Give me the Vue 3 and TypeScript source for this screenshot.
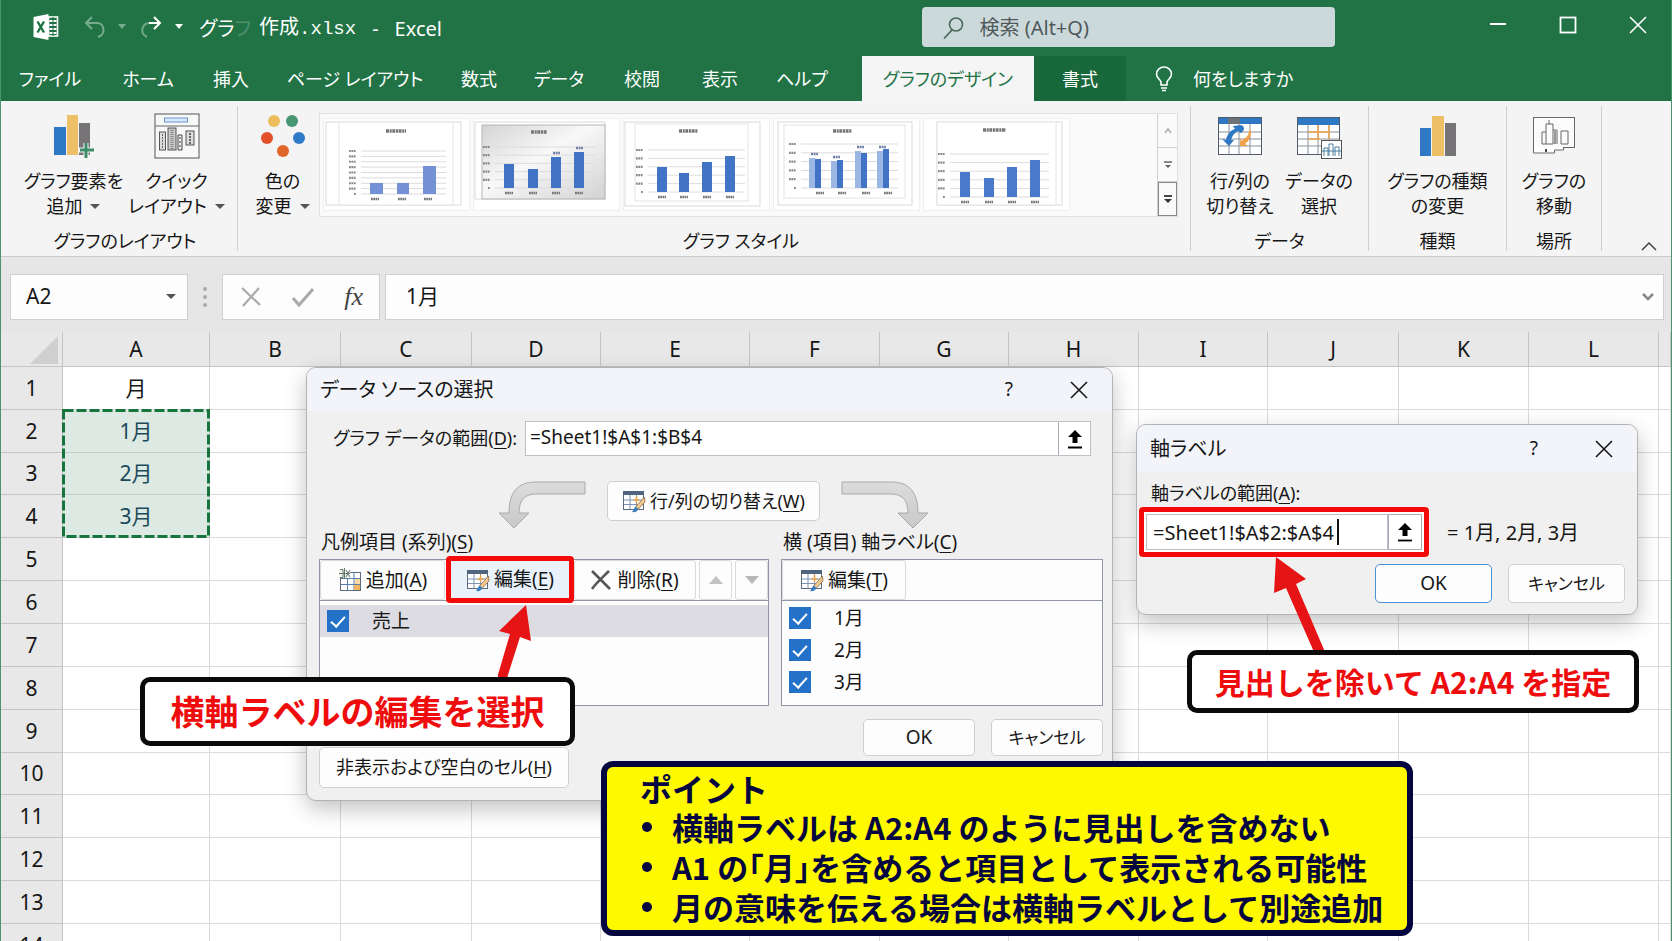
<script setup lang="ts">
import { ref } from 'vue'

interface Bar { x: number; w: number; top: number; light?: boolean }
interface Chart {
  outer: number[]
  frame: number[]
  shaded?: boolean
  title: number[]
  grid: number[]
  lines: number
  bars: Bar[]
  color: string
}

const tabs = ['ファイル', 'ホーム', '挿入', 'ページ レイアウト', '数式', 'データ', '校閲', '表示', 'ヘルプ']
const columns = ['A', 'B', 'C', 'D', 'E', 'F', 'G', 'H', 'I', 'J', 'K', 'L']
const rows = Array.from({ length: 14 }, (_, i) => i + 1)
const cellsA: Record<number, string> = { 1: '月', 2: '1月', 3: '2月', 4: '3月' }
const months = ref([
  { name: '1月', on: true },
  { name: '2月', on: true },
  { name: '3月', on: true },
])
const seriesOn = ref(true)
const nameBox = ref('A2')
const formula = ref('1月')
const chartRange = ref('=Sheet1!$A$1:$B$4')
const axisRange = ref('=Sheet1!$A$2:$A$4')
const points = [
  '横軸ラベルは A2:A4 のように見出しを含めない',
  'A1 の「月」を含めると項目として表示される可能性',
  '月の意味を伝える場合は横軸ラベルとして別途追加',
]

const charts: Chart[] = [
  {
    outer: [6, 8, 141, 91], frame: [19, 8, 133, 91], title: [66, 17, 86], grid: [41, 37, 126, 80], lines: 9, color: '#7391d4',
    bars: [{ x: 50, w: 13, top: 69 }, { x: 77, w: 12, top: 69 }, { x: 103, w: 13, top: 52 }],
  },
  {
    outer: [5, 8, 135, 85], frame: [12, 11, 135, 85], shaded: true, title: [61, 18, 77], grid: [25, 33, 125, 74], lines: 6, color: '#4274c6',
    bars: [{ x: 34, w: 10, top: 50 }, { x: 58, w: 10, top: 55 }, { x: 81, w: 10, top: 43 }, { x: 104, w: 10, top: 38 }],
  },
  {
    outer: [5, 8, 140, 92], frame: [15, 10, 128, 87], title: [59, 17, 78], grid: [28, 36, 125, 78], lines: 6, color: '#4274c6',
    bars: [{ x: 37, w: 10, top: 53 }, { x: 59, w: 10, top: 59 }, { x: 82, w: 10, top: 48 }, { x: 105, w: 10, top: 42 }],
  },
  {
    outer: [8, 8, 142, 91], frame: [14, 11, 135, 84], title: [63, 17, 82], grid: [31, 30, 128, 74], lines: 6, color: '#4274c6',
    bars: [
      { x: 39, w: 6, top: 44, light: true }, { x: 45, w: 6, top: 45 },
      { x: 61, w: 6, top: 47, light: true }, { x: 67, w: 6, top: 46 },
      { x: 85, w: 6, top: 37, light: true }, { x: 91, w: 6, top: 39 },
      { x: 107, w: 6, top: 37, light: true }, { x: 113, w: 6, top: 35 },
    ],
  },
  {
    outer: [17, 8, 142, 91], frame: [17, 8, 136, 91], title: [63, 16, 86], grid: [30, 40, 129, 83], lines: 6, color: '#4a78cb',
    bars: [{ x: 40, w: 10, top: 58 }, { x: 64, w: 10, top: 64 }, { x: 87, w: 10, top: 53 }, { x: 110, w: 10, top: 46 }],
  },
]

const gridY = (c: Chart, i: number): number => c.grid[1] + ((c.grid[3] - c.grid[1]) * i) / (c.lines - 1)
</script>

<template>
  <div class="app">
    <svg class="defs" aria-hidden="true">
      <defs>
        <linearGradient id="shade" x1="0" y1="0" x2="1" y2="1">
          <stop offset="0" stop-color="#d4d4d4" /><stop offset=".45" stop-color="#f8f8f8" /><stop offset="1" stop-color="#d2d2d2" />
        </linearGradient>
        <linearGradient id="bend" x1="0" y1="0" x2="0" y2="1">
          <stop offset="0" stop-color="#dcdcdc" /><stop offset="1" stop-color="#c9c9c9" />
        </linearGradient>
        <symbol id="grid-edit" viewBox="0 0 24 24">
          <rect x="1.5" y="2.5" width="20" height="18" fill="#fff" stroke="#5c6b80" />
          <rect x="1" y="2" width="21" height="4" fill="#51647f" />
          <path d="M2 11h19M2 15.500h19M8 6v14M14.500 6v14" stroke="#7c93b5" fill="none" />
          <path d="M14.500 7v7M11.500 11h6" stroke="#f0a24a" stroke-width="1.500" />
          <path d="M22.500 8l-9 10 2.500 2.500L23 13z" fill="#f3c88f" stroke="#8a6a48" stroke-width=".8" />
          <path d="M13.500 17.500l3 2.500c-1 2.500-3 3.500-6.500 3 1.500-1.500 1.500-3.500 3.500-5.500z" fill="#3a7fc0" />
        </symbol>
        <symbol id="pick" viewBox="0 0 16 20">
          <path d="M8 1l7 7h-4.500v6h-5V8H1z" fill="#000" /><path d="M1 18.500h14" stroke="#000" stroke-width="1.800" />
        </symbol>
        <symbol id="cross" viewBox="0 0 18 18">
          <path d="M1 1l16 16M17 1L1 17" fill="none" stroke="currentColor" stroke-width="1.600" />
        </symbol>
      </defs>
    </svg>

    <header class="titlebar">
      <svg class="logo" viewBox="0 0 25 26">
        <path d="M0 3L15 0v26L0 23z" fill="#fff" />
        <rect x="15" y="3" width="9" height="19" fill="none" stroke="#fff" stroke-width="1.600" />
        <path d="M16 7h7M16 11h7M16 15h7M16 19h7" stroke="#fff" stroke-width="1.800" /><path d="M19.500 3v19" stroke="#217346" />
        <path d="M4 7.500l6.500 11M10.500 7.500L4 18.500" stroke="#1f7344" stroke-width="2.400" />
      </svg>
      <button class="quick undo" aria-label="元に戻す">
        <svg width="22" height="24" viewBox="0 0 22 24"><path d="M8 2L2 8l6 6M2 8h11c8 0 9 12 1 14" fill="none" stroke="currentColor" stroke-width="2" /></svg>
        <svg width="8" height="5" viewBox="0 0 8 5"><path d="M0 0h8L4 5z" fill="currentColor" /></svg>
      </button>
      <button class="quick redo" aria-label="やり直し">
        <svg width="22" height="24" viewBox="0 0 22 24">
          <path d="M6 22C-2 18 1 8 9 8" fill="none" stroke="#6ea889" stroke-width="2" />
          <path d="M13 2l6 6-6 6M19 8H8" fill="none" stroke="currentColor" stroke-width="2" />
        </svg>
        <svg width="8" height="5" viewBox="0 0 8 5"><path d="M0 0h8L4 5z" fill="currentColor" /></svg>
      </button>
      <h1 class="doc"><span class="file"><span>グラ<span class="faded">フ</span></span><span>作成<span class="ext">.xlsx</span></span></span><span>-</span><span>Excel</span></h1>
      <label class="search">
        <svg width="22" height="24" viewBox="0 0 22 24"><circle cx="14" cy="8.500" r="6.500" fill="none" stroke="#47695b" stroke-width="1.600" /><path d="M10 14l-8 8.500" stroke="#47695b" stroke-width="1.800" /></svg>
        <input type="text" placeholder="検索 (Alt+Q)" aria-label="検索" />
      </label>
      <div class="window">
        <button aria-label="最小化"><svg width="18" height="18"><path d="M1 8h16" stroke="#fff" stroke-width="2" /></svg></button>
        <button aria-label="最大化"><svg width="18" height="18"><rect x="1.500" y="1.500" width="15" height="15" fill="none" stroke="#fff" stroke-width="1.800" /></svg></button>
        <button aria-label="閉じる"><svg width="18" height="18"><use href="#cross" /></svg></button>
      </div>
    </header>

    <nav class="tabs">
      <button v-for="t in tabs" :key="t">{{ t }}</button>
      <button class="active">グラフのデザイン</button>
      <button class="context">書式</button>
      <button class="tell">
        <svg width="18" height="26" viewBox="0 0 18 26">
          <path d="M6 19v-3C5 13 1.500 12 1.500 8a7.500 7 0 0 1 15 0c0 4-3.500 5-4.500 8v3z" fill="none" stroke="#fff" stroke-width="1.600" />
          <path d="M6 22h6M7 24.500h4" stroke="#fff" stroke-width="1.600" />
        </svg>
        何をしますか
      </button>
    </nav>

    <section class="ribbon">
      <div class="group layout">
        <div class="tools">
          <button>
            <svg width="42" height="46" viewBox="0 0 42 46">
              <rect x="1" y="14" width="12" height="28" fill="#2f78c4" /><rect x="14" y="2" width="11" height="40" fill="#edc068" /><rect x="26" y="10" width="11" height="32" fill="#767476" />
              <path d="M33 30v14M26 37h15" stroke="#f4f4f4" stroke-width="5" /><path d="M33 30v15M27 37h14" stroke="#3b8d69" stroke-width="3" />
            </svg>
            <span>グラフ要素を<br />追加<i class="caret"></i></span>
          </button>
          <button>
            <svg width="46" height="46" viewBox="0 0 46 46">
              <rect x="1" y="1" width="44" height="44" fill="#f8f8f8" stroke="#555" /><path d="M1 13h44" stroke="#666" />
              <rect x="10.500" y="5" width="23" height="4" fill="#dce8f6" stroke="#6a97cf" />
              <rect x="5.500" y="19" width="6" height="18" fill="#ddd" stroke="#555" /><path d="M8.500 21v15" stroke="#666" stroke-dasharray="2 1" />
              <rect x="14" y="15" width="8" height="22" fill="#c9c9c9" stroke="#555" /><path d="M18 17v19" stroke="#888" stroke-width="3" stroke-dasharray="1 1" />
              <path d="M24 37V22h4v15z" fill="#eee" stroke="#444" /><path d="M26 24v12" stroke="#444" stroke-dasharray="2 2" />
              <rect x="32" y="18" width="8" height="14" fill="#ddd" stroke="#555" /><path d="M36 20v11" stroke="#666" stroke-width="2" stroke-dasharray="2 1" />
            </svg>
            <span>クイック<br />レイアウト<i class="caret"></i></span>
          </button>
        </div>
        <p>グラフのレイアウト</p>
      </div>

      <div class="group styles">
        <div class="tools">
          <button class="colors">
            <svg width="46" height="46" viewBox="0 0 46 46">
              <circle cx="14" cy="8" r="6" fill="#edbc5c" /><circle cx="32" cy="8" r="6" fill="#479571" />
              <circle cx="7" cy="25" r="6" fill="#e4502a" /><circle cx="39" cy="25" r="6" fill="#2f7bc8" /><circle cx="23" cy="38" r="6" fill="#e0652a" />
            </svg>
            <span>色の<br />変更<i class="caret"></i></span>
          </button>
          <div class="gallery">
            <button v-for="(c, i) in charts" :key="i" class="thumb" :aria-label="`スタイル ${i + 1}`">
              <svg width="150" height="102" viewBox="0 0 150 102">
                <rect x="3.500" y="4.500" width="146" height="92" fill="#fff" stroke="#efefef" />
                <rect :x="c.outer[0]" :y="c.outer[1]" :width="c.outer[2] - c.outer[0]" :height="c.outer[3] - c.outer[1]" fill="#fff" stroke="#dadada" />
                <rect :x="c.frame[0]" :y="c.frame[1]" :width="c.frame[2] - c.frame[0]" :height="c.frame[3] - c.frame[1]" :fill="c.shaded ? 'url(#shade)' : '#fff'" :stroke="c.shaded ? '#b5b5b5' : '#e4e4e4'" />
                <path :d="`M${c.title[0]} ${c.title[1]}H${c.title[2]}`" stroke="#777" stroke-width="3.500" stroke-dasharray="3 .7 2 .6" />
                <g v-for="n in c.lines" :key="n">
                  <path :d="`M${c.grid[0]} ${gridY(c, n - 1)}H${c.grid[2]}`" stroke="#dcdcdc" />
                  <path :d="`M${c.grid[0] - (n === c.lines ? 7 : 12)} ${gridY(c, n - 1)}h${n === c.lines ? 2 : 7}`" stroke="#888" stroke-width="2.200" stroke-dasharray="1.800 .6" />
                </g>
                <g v-for="(b, k) in c.bars" :key="k">
                  <rect :x="b.x" :y="b.top" :width="b.w" :height="c.grid[3] - b.top" :fill="b.light ? '#9db7e4' : c.color" />
                  <path v-if="!b.light" :d="`M${b.x + 1} ${c.grid[3] + 5}h8`" stroke="#777" stroke-width="2.400" stroke-dasharray="1.800 .5" />
                  <path v-if="b.light || (c.shaded && k > 1)" :d="`M${b.x + 2} ${b.top - 4}h7`" stroke="#6f7fa5" stroke-width="2.400" stroke-dasharray="2 .6" />
                </g>
              </svg>
            </button>
            <div class="scroll">
              <button aria-label="上へ"><svg width="8" height="6"><path d="M1 5l3-4 3 4" fill="none" stroke="#aaa" stroke-width="1.500" /></svg></button>
              <button aria-label="下へ"><svg width="8" height="8"><path d="M0 1h8" stroke="#666" stroke-width="1.500" /><path d="M1 4h6L4 7z" fill="#666" /></svg></button>
              <button aria-label="その他" class="more"><svg width="8" height="8"><path d="M0 1h8" stroke="#333" stroke-width="1.800" /><path d="M0 4h8L4 8z" fill="#333" /></svg></button>
            </div>
          </div>
        </div>
        <p>グラフ スタイル</p>
      </div>

      <div class="group data">
        <div class="tools">
          <button>
            <svg width="46" height="46" viewBox="0 0 46 46">
              <rect x="1.500" y="4.500" width="43" height="37" fill="#fff" stroke="#505a68" /><rect x="2" y="5" width="42" height="6" fill="#2f78c4" /><rect x="11" y="5" width="12" height="6" fill="#6d7278" />
              <path d="M2 19h42M2 26h42M2 33h42M12 11v30M22 11v30M33 11v30" stroke="#8a929c" />
              <path d="M32 17c0 7-4 8-8 11l-1-4v9h8l-3-2c4-3 6-7 6-13z" fill="#f0a24a" />
              <path d="M5 26l4 1c1-6 5-10 9-11l-2-3 8-1c3 1 4 4 2 6l-2 2-3-2c-4 2-6 5-7 9l3 0-5 6z" fill="#2f78c4" />
            </svg>
            <span>行/列の<br />切り替え</span>
          </button>
          <button>
            <svg width="46" height="46" viewBox="0 0 46 46">
              <rect x="1.500" y="4.500" width="42" height="37" fill="#fff" stroke="#505a68" /><rect x="2" y="5" width="41" height="7" fill="#2f78c4" />
              <path d="M2 19h41M2 26h41M2 33h41M12 12v29M22 12v29M33 12v29" stroke="#8a929c" />
              <path d="M12 19h21M22 12v14M33 12v14M12 26h12" stroke="#f0a24a" stroke-width="1.500" />
              <rect x="25.500" y="27.500" width="20" height="18" fill="#fff" stroke="#555" /><path d="M28 43v-8h4v8M33 43V31h4v12M39 43v-9h4v9M26 38h19" stroke="#4d7f9f" fill="none" />
            </svg>
            <span>データの<br />選択</span>
          </button>
        </div>
        <p>データ</p>
      </div>

      <div class="group kind">
        <div class="tools">
          <button>
            <svg width="38" height="46" viewBox="0 0 38 46"><rect x="1" y="15" width="11" height="28" fill="#2f78c4" /><rect x="13" y="3" width="12" height="40" fill="#edc068" /><rect x="26" y="10" width="11" height="33" fill="#767476" /></svg>
            <span>グラフの種類<br />の変更</span>
          </button>
        </div>
        <p>種類</p>
      </div>

      <div class="group place">
        <div class="tools">
          <button>
            <svg width="46" height="46" viewBox="0 0 46 46">
              <rect x="2.500" y="4.500" width="41" height="30" fill="#fbfbfb" stroke="#666" />
              <path d="M11 31V19h4v-8h7v20zM18 11V7M22 17h4v14M15 19v12M30 31V18h7v13z" fill="none" stroke="#666" />
              <path d="M24 18v13" stroke="#999" stroke-width="2" /><path d="M2.500 34v6h21v-3h9v-3" fill="#fff" stroke="#666" /><path d="M15 36v3" stroke="#444" stroke-width="2" />
            </svg>
            <span>グラフの<br />移動</span>
          </button>
        </div>
        <p>場所</p>
      </div>
      <button class="collapse" aria-label="リボンを折りたたむ"><svg width="16" height="10"><path d="M1 9l7-7 7 7" fill="none" stroke="#444" stroke-width="1.500" /></svg></button>
    </section>

    <section class="formula-bar">
      <label class="box name"><input v-model="nameBox" type="text" aria-label="名前ボックス" /><i class="caret"></i></label>
      <span class="dots"><i></i><i></i><i></i></span>
      <div class="box actions">
        <button aria-label="キャンセル"><svg width="20" height="20" viewBox="0 0 20 20"><path d="M1 1l18 17M18 1L2 19" stroke="#aaa" stroke-width="2.200" fill="none" /></svg></button>
        <button aria-label="入力"><svg width="22" height="20" viewBox="0 0 22 20"><path d="M1 11l6 7L21 2" stroke="#aaa" stroke-width="3" fill="none" /></svg></button>
        <button class="fx" aria-label="関数の挿入">fx</button>
      </div>
      <label class="box value">
        <input v-model="formula" type="text" aria-label="数式バー" />
        <svg width="14" height="10"><path d="M2 2l5 5 5-5" fill="none" stroke="#888" stroke-width="2.500" /></svg>
      </label>
    </section>

    <table class="sheet">
      <colgroup>
        <col class="c-head" /><col class="c-a" /><col class="c-b" /><col class="c-c" /><col class="c-d" /><col class="c-e" />
        <col class="c-f" /><col class="c-g" /><col class="c-h" /><col class="c-i" /><col class="c-j" /><col class="c-k" /><col class="c-l" /><col />
      </colgroup>
      <thead>
        <tr>
          <th class="corner"><svg width="28" height="28"><path d="M28 0v28H0z" fill="#cfcfcf" /></svg></th>
          <th v-for="c in columns" :key="c" scope="col">{{ c }}</th>
          <th></th>
        </tr>
      </thead>
      <tbody>
        <tr v-for="r in rows" :key="r">
          <th scope="row">{{ r }}</th>
          <td :class="{ picked: r > 1 && r < 5 }">
            {{ cellsA[r] }}
            <svg v-if="r === 2" class="marquee" width="148" height="129"><rect x="1.500" y="1.500" width="145" height="126" fill="none" stroke="#15753c" stroke-width="3" stroke-dasharray="10 3" /></svg>
          </td>
          <td v-for="n in 12" :key="n"></td>
        </tr>
      </tbody>
    </table>

    <section class="dialog source" role="dialog" aria-label="データ ソースの選択">
      <header><h2>データ ソースの選択</h2><button class="help" aria-label="ヘルプ">?</button><button aria-label="閉じる"><svg width="18" height="18"><use href="#cross" /></svg></button></header>
      <div class="range-row">
        <label for="range">グラフ データの範囲(<u>D</u>):</label>
        <div class="ref"><input id="range" v-model="chartRange" type="text" /><button aria-label="範囲を選択"><svg width="16" height="20"><use href="#pick" /></svg></button></div>
      </div>
      <div class="switch-row">
        <svg width="88" height="48" viewBox="0 0 88 48"><path d="M87 1H38C19 1 11 12 11 32H1l15 15 15-15H21c0-13 6-19 17-19h49z" fill="url(#bend)" stroke="#a9a9a9" /></svg>
        <button class="btn"><svg width="24" height="24"><use href="#grid-edit" /></svg><span>行/列の切り替え(<u>W</u>)</span></button>
        <svg width="88" height="48" viewBox="0 0 88 48"><path d="M1 1h49c19 0 27 11 27 31h10L72 47 57 32h10c0-13-6-19-17-19H1z" fill="url(#bend)" stroke="#a9a9a9" /></svg>
      </div>
      <div class="lists">
        <div class="list-col">
          <h3>凡例項目 (系列)(<u>S</u>)</h3>
          <div class="panel">
            <div class="bar">
              <button class="tool add">
                <svg width="24" height="24" viewBox="0 0 24 24">
                  <rect x="2.500" y="4.500" width="20" height="18" fill="#fff" stroke="#5c6b80" /><path d="M9.500 4v18M16 4v18M3 10.500h19M3 16.500h19" stroke="#5d7ea8" />
                  <rect x="16" y="17" width="6" height="5" fill="#f5b75e" /><rect x="17" y="11" width="5" height="5" fill="#fbd9a5" />
                  <path d="M1 2h11v8H1z" fill="#eef3ee" /><path d="M6.500 0v11M1 5.500h11M2 1.500h3v8H2M8 2l4 7M12 2L8 9" stroke="#66796f" fill="none" />
                </svg><span>追加(<u>A</u>)</span>
              </button>
              <button class="tool edit"><svg width="24" height="24"><use href="#grid-edit" /></svg><span>編集(<u>E</u>)</span></button>
              <button class="tool del"><svg width="20" height="20" viewBox="0 0 20 20"><path d="M1 1l18 18M18 1C12 7 6 12 1 19" fill="none" stroke="#555" stroke-width="2.600" /></svg><span>削除(<u>R</u>)</span></button>
              <button class="tool arrow" aria-label="上へ"><svg width="14" height="8"><path d="M0 8l7-8 7 8z" fill="#c2c2c2" /></svg></button>
              <button class="tool arrow" aria-label="下へ"><svg width="14" height="8"><path d="M0 0h14L7 8z" fill="#b8b8b8" /></svg></button>
            </div>
            <label class="item selected"><input v-model="seriesOn" type="checkbox" />売上</label>
          </div>
        </div>
        <div class="list-col axis">
          <h3>横 (項目) 軸ラベル(<u>C</u>)</h3>
          <div class="panel">
            <div class="bar"><button class="tool edit-t"><svg width="24" height="24"><use href="#grid-edit" /></svg><span>編集(<u>T</u>)</span></button></div>
            <label v-for="m in months" :key="m.name" class="item"><input v-model="m.on" type="checkbox" />{{ m.name }}</label>
          </div>
        </div>
      </div>
      <footer>
        <button class="btn hidden-cells"><span>非表示および空白のセル(<u>H</u>)</span></button>
        <button class="btn">OK</button>
        <button class="btn cancel">キャンセル</button>
      </footer>
    </section>

    <section class="dialog axis-labels" role="dialog" aria-label="軸ラベル">
      <header><h2>軸ラベル</h2><button class="help" aria-label="ヘルプ">?</button><button aria-label="閉じる"><svg width="18" height="18"><use href="#cross" /></svg></button></header>
      <label class="axis-caption" for="axis">軸ラベルの範囲(<u>A</u>):</label>
      <div class="axis-row">
        <div class="ref marked"><input id="axis" v-model="axisRange" type="text" /><span class="text-caret"></span><button aria-label="範囲を選択"><svg width="16" height="20"><use href="#pick" /></svg></button></div>
        <span>= 1月, 2月, 3月</span>
      </div>
      <footer><button class="btn primary">OK</button><button class="btn cancel">キャンセル</button></footer>
    </section>

    <svg class="pointer one" width="36" height="76" viewBox="0 0 36 76"><path d="M28 1L1 27l11 3L-1 74h10L22 33l11 4z" fill="#e61414" /></svg>
    <svg class="pointer two" width="54" height="98" viewBox="0 0 54 98"><path d="M3 1L1 37l12-5 28 64h11L23 28l10-5z" fill="#e61414" /></svg>
    <p class="callout first">横軸ラベルの編集を選択</p>
    <p class="callout second">見出しを除いて A2:A4 を指定</p>
    <aside class="note">
      <h2>ポイント</h2>
      <ul><li v-for="p in points" :key="p">{{ p }}</li></ul>
    </aside>
  </div>
</template>

<style>
html, body { margin: 0; }
</style>

<style scoped>
* { box-sizing: border-box; }
.app {
  position: relative; display: flex; flex-direction: column; height: 100vh; overflow: hidden;
  border: solid #4b946f; border-width: 0 1px; background: #fff; color: #161616;
  font: 20px/25px "Noto Sans", "Noto Sans CJK JP", sans-serif; font-feature-settings: "palt";
}
.defs { position: absolute; width: 0; height: 0; }
button, input { font: inherit; color: inherit; font-feature-settings: inherit; margin: 0; padding: 0; border: 0; background: none; border-radius: 0; outline: 0; }
button { display: inline-flex; align-items: center; justify-content: center; white-space: nowrap; }
input { min-width: 0; }
h1, h2, h3, p, ul { margin: 0; padding: 0; font-size: inherit; font-weight: inherit; }
svg { flex: none; display: block; }
u { text-underline-offset: 3px; text-decoration-thickness: 1px; }
.caret { display: inline-block; border: 5px solid transparent; border-bottom: 0; border-top-color: #555; }

.titlebar { flex: none; display: flex; align-items: center; height: 56px; padding: 0 24px 3px 32px; background: #217346; color: #fff; }
.logo { width: 26px; height: 26px; }
.quick { gap: 12px; margin-left: 25px; width: 42px; }
.quick + .quick { margin-left: 15px; }
.undo { color: #78ac91; }
.doc { display: flex; align-items: center; gap: 16px; margin-left: 16px; padding-top: 3px; }
.doc .file { display: flex; align-items: center; gap: 8px; }
.doc .faded { color: #4d8e6c; }
.ext { font-family: "Liberation Mono", monospace; font-size: 19px; }
.search { position: absolute; left: 55%; width: 413px; margin-left: 2px; height: 40px; display: flex; align-items: center; gap: 16px; padding: 2px 20px 0; border-radius: 4px; background: #ccd9da; }
.search input { flex: 1; color: #50585a; }
.search input::placeholder { color: #50585a; opacity: 1; }
.window { display: flex; gap: 52px; margin-left: auto; padding-bottom: 4px; }

.tabs { flex: none; display: grid; grid-template-columns: 98px 98px 68px 180px 68px 92px 74px 82px 82px 19px 172px 92px auto 1fr; height: 45px; background: #217346; color: #fff; font-size: 18px; }
.tabs button { padding-top: 1px; }
.tabs .active { grid-column: 11; background: #f5f5f5; color: #217346; }
.tabs .context { background: #19683b; }
.tabs .tell { gap: 20px; padding-left: 29px; }

.ribbon { flex: none; display: flex; height: 156px; background: #f4f4f4; border-bottom: 1px solid #cbcbcb; font-size: 18px; }
.group { flex: none; display: flex; flex-direction: column; margin: 5px 0; border-right: 1px solid #cfcfcf; }
.group p { text-align: center; line-height: 20px; margin-top: auto; }
.tools { display: flex; justify-content: center; padding-top: 7px; }
.tools > button { flex-direction: column; justify-content: flex-start; gap: 10px; text-align: center; line-height: 25px; }
.tools .caret { margin: 0 0 4px 8px; }
.layout { width: 237px; padding-left: 12px; }
.layout .tools > button { width: 103px; }
.styles { flex: 1; padding-right: 12px; }
.styles p { padding-left: 66px; }
.tools > .colors { flex: none; width: 81px; padding-left: 8px; }
.gallery { flex: 1; display: flex; height: 104px; overflow: hidden; border: 1px solid #e0e0e0; background: #fafafa; }
.thumb { flex: none; }
.scroll { display: grid; grid-template-rows: 34px 34px 1fr; width: 20px; margin-left: auto; border-left: 1px solid #d0d0d0; }
.scroll button { border-bottom: 1px solid #d0d0d0; }
.scroll .more { border: 1px solid #888; }
.data { width: 178px; }
.data .tools > button { width: 79px; }
.kind { width: 138px; }
.place { width: 95px; }
.collapse { margin: auto 14px 5px 39px; }

.formula-bar { flex: none; display: flex; align-items: center; height: 75px; padding: 4px 7px 0 9px; background: #e6e6e6; font-size: 21px; }
.box { display: flex; align-items: center; height: 46px; background: #fdfdfd; border: 1px solid #cfcfcf; }
.name { width: 178px; padding: 0 11px 0 15px; }
.name input { flex: 1; }
.dots { display: grid; gap: 4px; margin: 0 15px; }
.dots i { width: 4px; height: 4px; border-radius: 2px; background: #aaa; }
.actions { width: 158px; justify-content: space-between; padding: 0 16px 0 18px; }
.fx { font: italic 26px/30px "Liberation Serif", serif; color: #444; }
.value { flex: 1; margin-left: 5px; padding: 0 8px 0 20px; }
.value input { flex: 1; }

.sheet { width: 100%; flex: none; table-layout: fixed; border-collapse: separate; border-spacing: 0; font-size: 21px; line-height: 24px; text-align: center; }
.sheet th, .sheet td { padding: 0 0 1px; font-weight: 400; border: solid #dadada; border-width: 0 1px 1px 0; }
.sheet th { background: #e8e8e8; border-color: #c4c4c4; }
.sheet thead th { height: 35px; }
.sheet tbody tr { height: 43px; }
.sheet tbody tr:nth-child(7n+3) { height: 42px; }
.sheet .corner svg { margin: 2px 4px 0 auto; }
.sheet td { position: relative; }
.sheet td.picked { background: #dde9e3; color: #1a4a5a; border-color: #c3d0ca; }
.marquee { position: absolute; top: -1px; left: -1px; z-index: 1; }
.c-head { width: 62px; } .c-a { width: 147px; } .c-b { width: 131px; } .c-c { width: 131px; } .c-d { width: 129px; } .c-e { width: 149px; }
.c-f { width: 130px; } .c-g { width: 129px; } .c-h { width: 130px; } .c-i { width: 129px; } .c-j { width: 131px; } .c-k { width: 130px; } .c-l { width: 130px; }

.dialog { position: absolute; border: 1px solid #b3b3b3; border-radius: 10px; background: #f0f0f0; box-shadow: 0 8px 22px rgba(0, 0, 0, .24); z-index: 2; overflow: hidden; font-size: 19px; }
.dialog > header { display: flex; align-items: center; height: 43px; padding: 0 24px 0 13px; background: #f2f4fa; }
.dialog h2 { flex: 1; font-size: 20px; }
.help { margin-right: 57px; }
.source { left: 305px; top: 367px; width: 807px; height: 434px; }
.range-row { display: flex; align-items: center; justify-content: space-between; padding: 10px 21px 0 26px; }
.range-row label { font-size: 18px; white-space: nowrap; }
.ref { display: flex; width: 566px; height: 35px; border: 1px solid #bcc0c8; background: #fff; }
.ref input { flex: 1; padding: 0 4px 2px; }
.ref button { width: 32px; border-left: 1px solid #a9adb5; }
.switch-row { display: flex; justify-content: center; align-items: flex-start; gap: 21px; padding: 25px 0 0 8px; }
.btn { height: 37px; border: 1px solid #cfcfcf; border-radius: 5px; background: #fdfdfd; }
.switch-row .btn { width: 213px; height: 40px; gap: 4px; font-size: 18px; }
.lists { display: flex; gap: 12px; padding: 0 9px 0 12px; }
.list-col { flex: 1; }
.list-col.axis { flex: none; width: 322px; }
.list-col h3 { padding: 1px 0 4px 2px; }
.panel { height: 147px; border: 1px solid #8f97a5; background: #fdfdfd; }
.bar { display: flex; height: 41px; border-bottom: 1px solid #8f97a5; margin-bottom: 4px; }
.axis .bar { margin-bottom: 1px; }
.tool { gap: 4px; border: 1px solid #dadada; border-radius: 3px; }
.add { width: 125px; }
.edit { width: 128px; height: 47px; margin-top: -4px; border: 5px solid #f50a0a; border-radius: 4px; background: #e9f2fb; z-index: 1; flex: none; margin-left: 1px; }
.del { flex: 1; gap: 6px; }
.arrow { width: 33px; margin-left: 3px; }
.edit-t { width: 124px; }
.item { display: flex; align-items: center; gap: 23px; height: 32px; padding-left: 7px; }
.item input { appearance: none; flex: none; width: 22px; height: 22px; background: #2472c8; display: grid; place-items: center; }
.item input:checked::after { content: ""; width: 6px; height: 12px; border: solid #fff; border-width: 0 2px 2px 0; transform: rotate(42deg); margin-bottom: 3px; }
.selected { background: #dcdce2; }
.source footer { display: flex; align-items: flex-start; gap: 16px; padding: 13px 9px 0 12px; }
.source footer .btn { width: 112px; }
.source footer .hidden-cells { width: 250px; height: 41px; margin: 28px auto 0 0; font-size: 18px; }
.btn.cancel { font-size: 17px; }
.axis-labels { left: 1135px; top: 424px; width: 502px; height: 191px; }
.axis-labels > header { height: 47px; }
.axis-caption { display: block; padding: 8px 0 0 14px; line-height: 27px; font-size: 18px; }
.axis-row { display: flex; align-items: center; gap: 18px; padding: 0 0 0 2px; font-size: 20px; }
.ref.marked { position: relative; width: 290px; height: 50px; border: 5px solid #f50a0a; border-radius: 4px; padding: 2px; }
.ref.marked input { border: 1px solid #bcc0c8; padding: 0 6px; }
.ref.marked button { border: 1px solid #a9adb5; width: 34px; }
.text-caret { position: absolute; left: 193px; top: 7px; width: 2px; height: 26px; background: #111; }
.axis-labels footer { display: flex; justify-content: flex-end; gap: 16px; padding: 7px 12px 0 0; }
.axis-labels .btn { width: 117px; height: 39px; }
.axis-labels .primary { border-color: #4a90d9; }

.pointer { position: absolute; z-index: 3; }
.one { left: 497px; top: 604px; }
.two { left: 1272px; top: 556px; }
.callout { position: absolute; z-index: 4; display: grid; place-items: center; border: 5px solid #0a0a0a; border-radius: 10px; background: #fff; color: #ee0c0c; font-family: "Noto Sans CJK JP", sans-serif; font-weight: 700; font-feature-settings: normal; white-space: nowrap; }
.first { left: 139px; top: 677px; width: 435px; height: 69px; font-size: 34px; padding-bottom: 2px; }
.second { left: 1186px; top: 650px; width: 452px; height: 63px; font-size: 30px; padding-bottom: 1px; }
.note { position: absolute; z-index: 4; left: 600px; top: 761px; width: 812px; height: 175px; padding: 2px 0 0 33px; border: 6px solid #05063f; border-radius: 12px; background: #fff900; color: #05063f; font: 700 31px/40px "Noto Sans CJK JP", sans-serif; font-feature-settings: "halt"; white-space: nowrap; }
.note h2 { font-size: 32px; line-height: 38px; }
.note ul { list-style: none; }
.note li { display: flex; align-items: center; }
.note li::before { content: ""; width: 10px; height: 10px; border-radius: 5px; background: #05063f; margin: 0 20px 0 2px; }
</style>
